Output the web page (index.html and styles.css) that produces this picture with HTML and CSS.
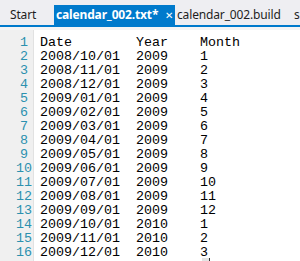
FILE: index.html
```html
<!DOCTYPE html>
<html>
<head>
<meta charset="utf-8">
<link rel="stylesheet" href="styles.css">
</head>
<body>
<div class="app">
  <div class="tabbar">
    <div class="tab tab-start">Start</div>
    <div class="tab tab-active"><span class="tab-title">calendar_002.txt*</span><span class="tab-close">✕</span></div>
    <div class="tab tab-inactive">calendar_002.build</div>
    <div class="tab tab-more">s</div>
  </div>
  <div class="tab-underline"></div>
  <div class="band"></div>
  <div class="editor">
    <div class="gutter">
      <div class="ln">1</div><div class="ln">2</div><div class="ln">3</div><div class="ln">4</div>
      <div class="ln">5</div><div class="ln">6</div><div class="ln">7</div><div class="ln">8</div>
      <div class="ln">9</div><div class="ln">10</div><div class="ln">11</div><div class="ln">12</div>
      <div class="ln">13</div><div class="ln">14</div><div class="ln">15</div><div class="ln">16</div>
    </div>
    <div class="code"><div class="line">Date        Year    Month</div><div class="line">2008/10/01  2009    1</div><div class="line">2008/11/01  2009    2</div><div class="line">2008/12/01  2009    3</div><div class="line">2009/01/01  2009    4</div><div class="line">2009/02/01  2009    5</div><div class="line">2009/03/01  2009    6</div><div class="line">2009/04/01  2009    7</div><div class="line">2009/05/01  2009    8</div><div class="line">2009/06/01  2009    9</div><div class="line">2009/07/01  2009    10</div><div class="line">2009/08/01  2009    11</div><div class="line">2009/09/01  2009    12</div><div class="line">2009/10/01  2010    1</div><div class="line">2009/11/01  2010    2</div><div class="line">2009/12/01  2010    3</div></div>
    <div class="caret-mark"></div>
  </div>
</div>
</body>
</html>
```

FILE: styles.css
```css
html, body {
  margin: 0;
  padding: 0;
  background: #ffffff;
}
.app {
  width: 300px;
  height: 261px;
  overflow: hidden;
  display: flex;
  flex-direction: column;
}
.tabbar {
  height: 25px;
  background: #eeeef2;
  display: flex;
  align-items: flex-end;
  white-space: nowrap;
  font-family: "Noto Sans", "Liberation Sans", sans-serif;
  font-size: 12px;
  letter-spacing: -0.15px;
  color: #1e1e1e;
  overflow: hidden;
}
.tab {
  height: 20px;
  line-height: 20px;
  box-sizing: border-box;
  flex-shrink: 0;
}
.tab-start {
  width: 54px;
  padding-left: 10px;
}
.tab-active {
  width: 121px;
  background: #007acc;
  color: #ffffff;
  font-weight: bold;
  padding-left: 2px;
  display: flex;
  align-items: center;
}
.tab-close {
  font-weight: normal;
  font-size: 10px;
  margin-left: 7px;
}
.tab-inactive {
  width: 119px;
  padding-left: 2px;
}
.tab-more {
  padding-left: 0;
}
.tab-underline {
  height: 2px;
  background: #007acc;
}
.band {
  height: 3px;
  background: #f5f5f5;
}
.editor {
  position: relative;
  flex: 1;
  display: flex;
  font-family: "Liberation Mono", "Courier New", monospace;
  font-size: 13.333px;
  line-height: 14px;
}
.gutter {
  width: 33px;
  background: #f0f0f0;
  border-right: 1px solid #e2e2e2;
  padding-top: 6px;
  color: #2b91af;
}
.ln {
  height: 14px;
  width: 16px;
  margin-left: 16px;
  text-align: center;
  white-space: pre;
}
.code {
  padding-top: 6px;
  padding-left: 6px;
  color: #000000;
}
.line {
  height: 14px;
  white-space: pre;
}
.caret-mark {
  position: absolute;
  left: 202px;
  top: 228px;
  width: 7px;
  height: 3px;
  background: #e4e4e4;
  border-right: 1px solid #333333;
}
```
